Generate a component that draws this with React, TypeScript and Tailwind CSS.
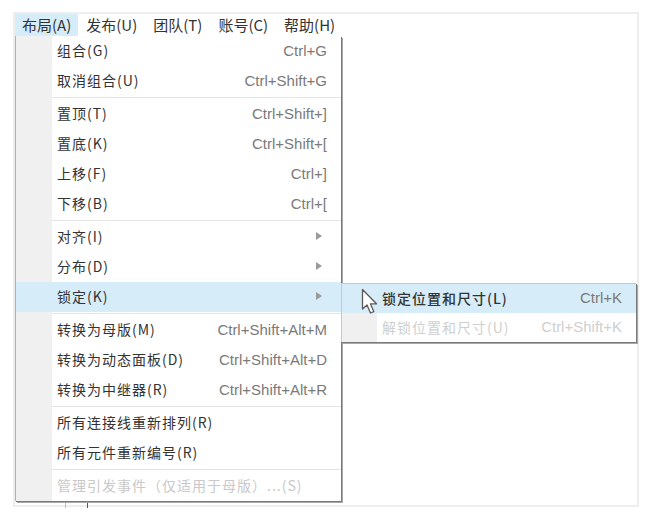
import React from 'react';

type Item =
  | { kind: 'item'; label: string; shortcut?: string; sub?: boolean; active?: boolean; disabled?: boolean }
  | { kind: 'sep' };

const items: Item[] = [
  { kind: 'item', label: '组合(G)', shortcut: 'Ctrl+G' },
  { kind: 'item', label: '取消组合(U)', shortcut: 'Ctrl+Shift+G' },
  { kind: 'sep' },
  { kind: 'item', label: '置顶(T)', shortcut: 'Ctrl+Shift+]' },
  { kind: 'item', label: '置底(K)', shortcut: 'Ctrl+Shift+[' },
  { kind: 'item', label: '上移(F)', shortcut: 'Ctrl+]' },
  { kind: 'item', label: '下移(B)', shortcut: 'Ctrl+[' },
  { kind: 'sep' },
  { kind: 'item', label: '对齐(I)', sub: true },
  { kind: 'item', label: '分布(D)', sub: true },
  { kind: 'item', label: '锁定(K)', sub: true, active: true },
  { kind: 'sep' },
  { kind: 'item', label: '转换为母版(M)', shortcut: 'Ctrl+Shift+Alt+M' },
  { kind: 'item', label: '转换为动态面板(D)', shortcut: 'Ctrl+Shift+Alt+D' },
  { kind: 'item', label: '转换为中继器(R)', shortcut: 'Ctrl+Shift+Alt+R' },
  { kind: 'sep' },
  { kind: 'item', label: '所有连接线重新排列(R)' },
  { kind: 'item', label: '所有元件重新编号(R)' },
  { kind: 'sep' },
  { kind: 'item', label: '管理引发事件（仅适用于母版）...(S)', disabled: true },
];

const cjk = { fontFamily: '"Noto Sans CJK SC", "Noto Sans", sans-serif' };
const latin = { fontFamily: '"Liberation Sans", Arial, sans-serif' };

const SubArrow = () => (
  <svg width="6" height="8" viewBox="0 0 6 8" className="mr-[5px]">
    <path d="M0 0 L6 4 L0 8 Z" fill="#9a9a9a" />
  </svg>
);

const Cursor = () => (
  <svg width="20" height="28" viewBox="0 0 20 28" className="absolute left-[361px] top-[288px]">
    <path
      d="M1.5 1.5 L1.5 21 L6 17 L9.5 25 L12.8 23.6 L9.4 15.8 L15.5 15.8 Z"
      fill="#ffffff"
      stroke="#5a5a5a"
      strokeWidth="1.3"
      strokeLinejoin="round"
    />
  </svg>
);

const Row = ({ item }: { item: Extract<Item, { kind: 'item' }> }) => (
  <div className={`flex h-[30px] ${item.active ? 'bg-[#d6ecf8]' : ''}`}>
    <div className={`w-[36px] shrink-0 ${item.active ? '' : 'bg-[#f0f0f0]'}`} />
    <div className="flex flex-1 items-center justify-between pb-[2px] pl-[5px] pr-[14px]">
      <span
        className={`text-[14px] leading-none tracking-[1px] ${item.disabled ? 'text-[#c9c9c9]' : 'text-[#333333]'}`}
        style={cjk}
      >
        {item.label}
      </span>
      {item.shortcut && (
        <span className="text-[15px] leading-none text-[#7a7a7a]" style={latin}>
          {item.shortcut}
        </span>
      )}
      {item.sub && <SubArrow />}
    </div>
  </div>
);

const Sep = () => (
  <div className="flex h-[3px]">
    <div className="w-[36px] shrink-0 bg-[#f0f0f0]" />
    <div className="flex flex-1 items-center">
      <div className="h-px w-full bg-[#e4e4e4]" />
    </div>
  </div>
);

export default function App() {
  const menuBar = ['布局(A)', '发布(U)', '团队(T)', '账号(C)', '帮助(H)'];
  return (
    <div className="relative h-[514px] w-[646px] overflow-hidden bg-white">
      <div className="ml-[13px] mt-[12px] h-[495px] w-[626px] border-2 border-[#eeeeee]">
        <div className="flex h-[22px] items-stretch">
          {menuBar.map((m, i) => (
            <div
              key={m}
              className={`flex items-center pb-px text-[15px] leading-none text-[#333333] ${
                i === 0 ? 'bg-[#d6ecf8] pl-[7px] pr-[7px]' : 'px-[8px]'
              }`}
              style={cjk}
            >
              {m}
            </div>
          ))}
        </div>
      </div>

      {/* content behind menu, peeking below */}
      <div className="absolute left-[65px] top-[500px] h-[8px] w-px bg-[#bdbdbd]" />
      <div className="absolute left-[87px] top-[500px] h-[8px] w-px bg-[#555555]" />

      {/* dropdown */}
      <div className="absolute left-[15px] top-[36px] w-[326px] border-l border-[#b0b0b0] bg-white shadow-[1px_1px_0_#7a7a7a,2px_2px_0_#a8a8a8]">
        {items.map((it, i) => (it.kind === 'sep' ? <Sep key={i} /> : <Row key={i} item={it} />))}
      </div>

      {/* submenu */}
      <div className="absolute left-[341px] top-[283px] w-[295px] border-l border-t border-[#c8c8c8] bg-white shadow-[1px_1px_0_#7a7a7a,2px_2px_0_#a8a8a8]">
        <div className="flex h-[29px] bg-[#d6ecf8]">
          <div className="w-[35px] shrink-0" />
          <div className="flex flex-1 items-center justify-between pb-[2px] pl-[5px] pr-[14px]">
            <span className="text-[14px] font-medium leading-none tracking-[1px] text-[#333333]" style={cjk}>
              锁定位置和尺寸(L)
            </span>
            <span className="text-[15px] leading-none text-[#7a7a7a]" style={latin}>
              Ctrl+K
            </span>
          </div>
        </div>
        <div className="flex h-[29px]">
          <div className="w-[35px] shrink-0 bg-[#f0f0f0]" />
          <div className="flex flex-1 items-center justify-between pb-[2px] pl-[5px] pr-[14px]">
            <span className="text-[14px] leading-none tracking-[1px] text-[#cfcfcf]" style={cjk}>
              解锁位置和尺寸(U)
            </span>
            <span className="text-[15px] leading-none text-[#cfcfcf]" style={latin}>
              Ctrl+Shift+K
            </span>
          </div>
        </div>
      </div>

      <Cursor />
    </div>
  );
}
